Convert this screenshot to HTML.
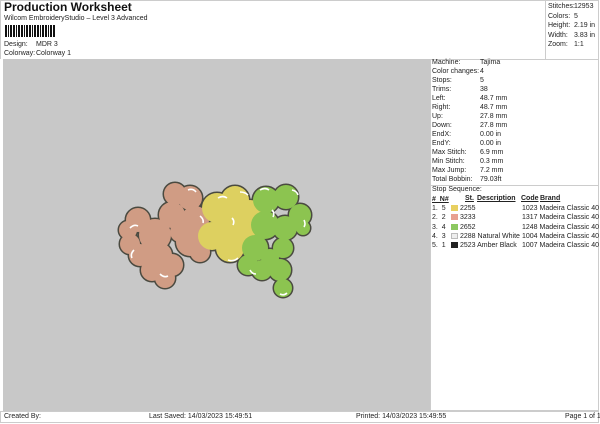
<!DOCTYPE html><html><head><style>
body{margin:0;width:600px;height:424px;background:#fff;font-family:"Liberation Sans",sans-serif;font-size:7px;color:#222;position:relative;overflow:hidden}
.a{position:absolute;white-space:nowrap}
.sw{display:inline-block;width:7px;height:6px;vertical-align:-1px;margin-right:2px}
</style></head><body>
<div class="a" style="left:4px;top:0;font-size:12px;font-weight:bold;color:#111">Production Worksheet</div>
<div class="a" style="left:4px;top:15px">Wilcom EmbroideryStudio – Level 3 Advanced</div>
<div class="a" style="left:5px;top:25px;width:51px;height:12px;background:repeating-linear-gradient(90deg,#111 0 2px,#fff 2px 3px,#111 3px 4px,#fff 4px 5px,#111 5px 7px,#fff 7px 8px)"></div>
<div class="a" style="left:4px;top:41px">Design:</div><div class="a" style="left:36px;top:41px">MDR 3</div>
<div class="a" style="left:4px;top:50px">Colorway:</div><div class="a" style="left:36px;top:50px">Colorway 1</div>
<div class="a" style="left:0;top:0;width:599px;height:59px;border:1px solid #ccc;box-sizing:border-box;border-bottom:none"></div>
<div class="a" style="left:545px;top:0;width:54px;height:59px;border-left:1px solid #ccc;box-sizing:border-box"></div>
<div class="a" style="left:548px;top:2px;line-height:9.5px">Stitches:<br>Colors:<br>Height:<br>Width:<br>Zoom:</div>
<div class="a" style="left:574px;top:2px;line-height:9.5px">12953<br>5<br>2.19 in<br>3.83 in<br>1:1</div>
<div class="a" style="left:3px;top:59px;width:427px;height:352px;background:#c8c8c8"></div>
<div class="a" style="left:430px;top:59px;width:169px;height:352px;border:1px solid #ccc;box-sizing:border-box"></div>
<div class="a" style="left:430px;top:185px;width:169px;border-top:1px solid #ccc"></div>
<div class="a" style="left:432px;top:58px;line-height:9px">Machine:<br>Color changes:<br>Stops:<br>Trims:<br>Left:<br>Right:<br>Up:<br>Down:<br>EndX:<br>EndY:<br>Max Stitch:<br>Min Stitch:<br>Max Jump:<br>Total Bobbin:</div>
<div class="a" style="left:480px;top:58px;line-height:9px">Tajima<br>4<br>5<br>38<br>48.7 mm<br>48.7 mm<br>27.8 mm<br>27.8 mm<br>0.00 in<br>0.00 in<br>6.9 mm<br>0.3 mm<br>7.2 mm<br>79.03ft</div>
<div class="a" style="left:432px;top:186px">Stop Sequence:</div>
<div class="a" style="left:432px;top:195px;line-height:9px;font-weight:bold;text-decoration:underline">#&nbsp; N#</div>
<div class="a" style="left:465px;top:195px;font-weight:bold;text-decoration:underline">St.</div>
<div class="a" style="left:477px;top:195px;font-weight:bold;text-decoration:underline">Description</div>
<div class="a" style="left:521px;top:195px;font-weight:bold;text-decoration:underline">Code</div>
<div class="a" style="left:540px;top:195px;font-weight:bold;text-decoration:underline">Brand</div>
<div class="a" style="left:432px;top:204px;line-height:9.3px">1.&nbsp; 5<br>2.&nbsp; 2<br>3.&nbsp; 4<br>4.&nbsp; 3<br>5.&nbsp; 1</div>
<div class="a" style="left:451px;top:204px;line-height:9.3px"><span class="sw" style="background:#e8d060"></span>2255<br><span class="sw" style="background:#e8a090"></span>3233<br><span class="sw" style="background:#8cc860"></span>2652<br><span class="sw" style="background:#eee;border:1px solid #bbb;width:5px;height:4px"></span>2288 Natural White<br><span class="sw" style="background:#222"></span>2523 Amber Black</div>
<div class="a" style="left:522px;top:204px;line-height:9.3px">1023 Madeira Classic 40<br>1317 Madeira Classic 40<br>1248 Madeira Classic 40<br>1004 Madeira Classic 40<br>1007 Madeira Classic 40</div>
<div class="a" style="left:0;top:411px;width:599px;height:12px;border:1px solid #ccc;box-sizing:border-box"></div>
<div class="a" style="left:4px;top:413px">Created By:</div>
<div class="a" style="left:149px;top:413px">Last Saved: 14/03/2023 15:49:51</div>
<div class="a" style="left:356px;top:413px">Printed: 14/03/2023 15:49:55</div>
<div class="a" style="left:565px;top:413px">Page 1 of 1</div>
<svg class="a" style="left:100px;top:170px" width="220" height="140" viewBox="0 0 220 140">
<defs>
<g id="p"><circle cx="38" cy="50" r="12"/><circle cx="28" cy="60" r="9"/><circle cx="30" cy="74" r="10"/><circle cx="40" cy="85" r="11"/><circle cx="52" cy="100" r="11"/><circle cx="65" cy="108" r="10"/><circle cx="72" cy="95" r="11"/><circle cx="55" cy="65" r="16"/><circle cx="60" cy="85" r="12"/>
<circle cx="75" cy="24" r="11"/><circle cx="90" cy="28" r="12"/><circle cx="72" cy="45" r="13"/><circle cx="95" cy="50" r="14"/><circle cx="90" cy="72" r="14"/><circle cx="100" cy="82" r="10"/><circle cx="80" cy="62" r="10"/><circle cx="103" cy="60" r="9"/></g>
<g id="y"><circle cx="117" cy="38" r="15"/><circle cx="135" cy="30" r="14"/><circle cx="150" cy="43" r="13"/><circle cx="148" cy="63" r="13"/><circle cx="130" cy="78" r="14"/><circle cx="112" cy="66" r="14"/><circle cx="130" cy="55" r="15"/></g>
<g id="g"><circle cx="166" cy="30" r="13"/><circle cx="186" cy="27" r="12"/><circle cx="200" cy="45" r="11"/><circle cx="203" cy="58" r="7"/><circle cx="185" cy="58" r="12"/><circle cx="165" cy="55" r="14"/><circle cx="155" cy="78" r="13"/><circle cx="148" cy="95" r="10"/><circle cx="162" cy="100" r="10"/><circle cx="183" cy="78" r="10"/><circle cx="180" cy="100" r="11"/><circle cx="183" cy="118" r="9"/><circle cx="170" cy="88" r="9"/></g>
</defs>
<g stroke="#4a4a40" stroke-width="3"><use href="#p"/><use href="#y"/><use href="#g"/></g>
<g fill="#d09c84"><use href="#p"/></g>
<g fill="#ddd060"><use href="#y"/></g>
<g fill="#8cc450"><use href="#g"/></g>
<g fill="none" stroke="#fff" stroke-width="1.6">
<path d="M30 58q4-4 8-2M34 80q-4 4-2 8M60 104q4 4 8 2M88 20q5-2 8 2M100 46q4 3 3 7M118 28q5-3 9 0M140 22q5 0 8 3M128 90q6 2 10-2M160 20q5-3 9 0M192 20q5 1 6 5M204 50q2 4 0 7M150 100q2 4 6 4M180 124q4 2 7-1M132 48q3 3 1 7M172 40q3 3 1 7"/></g>
</svg>
</body></html>
